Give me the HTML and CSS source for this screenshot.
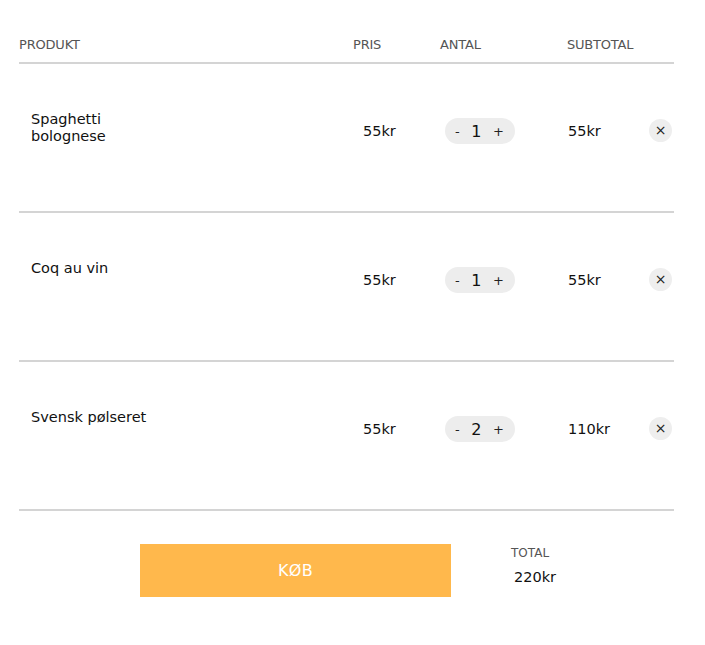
FILE: index.html
```html
<!DOCTYPE html>
<html lang="da">
<head>
<meta charset="utf-8">
<title>Kurv</title>
<link rel="stylesheet" href="styles.css">
</head>
<body>
<div class="cart">
  <div class="cart-head">
    <div class="h-prod">PRODUKT</div>
    <div class="h-price">PRIS</div>
    <div class="h-qty">ANTAL</div>
    <div class="h-sub">SUBTOTAL</div>
  </div>

  <div class="cart-row">
    <div class="c-name">Spaghetti<br>bolognese</div>
    <div class="c-price"><span>55kr</span></div>
    <div class="c-qty"><div class="qty"><span class="q-btn">-</span><span class="q-num">1</span><span class="q-btn">+</span></div></div>
    <div class="c-sub"><span>55kr</span><span class="remove">×</span></div>
  </div>

  <div class="cart-row">
    <div class="c-name">Coq au vin</div>
    <div class="c-price"><span>55kr</span></div>
    <div class="c-qty"><div class="qty"><span class="q-btn">-</span><span class="q-num">1</span><span class="q-btn">+</span></div></div>
    <div class="c-sub"><span>55kr</span><span class="remove">×</span></div>
  </div>

  <div class="cart-row">
    <div class="c-name">Svensk pølseret</div>
    <div class="c-price"><span>55kr</span></div>
    <div class="c-qty"><div class="qty"><span class="q-btn">-</span><span class="q-num">2</span><span class="q-btn">+</span></div></div>
    <div class="c-sub"><span>110kr</span><span class="remove">×</span></div>
  </div>

  <div class="cart-foot">
    <button class="buy">KØB</button>
    <div class="total">
      <div class="total-label">TOTAL</div>
      <div class="total-value">220kr</div>
    </div>
  </div>
</div>
</body>
</html>
```

FILE: styles.css
```css
* { box-sizing: border-box; }

body {
  margin: 0;
  background: #ffffff;
  font-family: "DejaVu Sans", "Noto Sans", sans-serif;
  color: #111111;
}

.cart {
  margin-left: 19px;
  width: 655px;
}

.cart-head {
  display: grid;
  grid-template-columns: 334px 87px 127px 1fr;
  padding-top: 37px;
  height: 64px;
  border-bottom: 2px solid #d4d4d4;
  font-size: 13px;
  line-height: 16px;
  color: #555555;
  letter-spacing: -0.2px;
}

.cart-row {
  display: grid;
  grid-template-columns: 334px 87px 127px 1fr;
  align-items: start;
  height: 149px;
  border-bottom: 2px solid #d4d4d4;
  font-size: 14.5px;
  line-height: 17px;
}

.c-name {
  padding-top: 47px;
  padding-left: 12px;
}

.c-price,
.c-qty,
.c-sub {
  margin-top: 54px;
  height: 26px;
  display: flex;
  align-items: center;
}

.c-price { padding-left: 10px; }

.c-qty { padding-left: 5px; }

.c-sub {
  padding-left: 1px;
  position: relative;
}

.remove {
  position: absolute;
  left: 82px;
  top: 1px;
  width: 23px;
  height: 23px;
  border-radius: 50%;
  background: #eeeeee;
  display: flex;
  align-items: center;
  justify-content: center;
  font-size: 14px;
  color: #222222;
}

.qty {
  width: 70px;
  height: 26px;
  border-radius: 13px;
  background: #ededed;
  display: flex;
  align-items: center;
  justify-content: space-between;
  padding: 0 11px 0 10px;
}

.q-btn {
  font-size: 13px;
  color: #222222;
}

.q-num {
  font-size: 16px;
  color: #111111;
}

.cart-foot {
  display: flex;
  align-items: flex-start;
  padding-top: 33px;
}

.buy {
  margin-left: 121px;
  width: 311px;
  height: 53px;
  border: none;
  background: #ffb84c;
  color: #ffffff;
  font-family: inherit;
  font-size: 16px;
  letter-spacing: 0.3px;
  padding: 0;
}

.total {
  margin-left: 60px;
  padding-top: 1px;
}

.total-label {
  font-size: 12px;
  line-height: 16px;
  color: #555555;
}

.total-value {
  margin-top: 8px;
  padding-left: 3px;
  font-size: 14.5px;
  line-height: 17px;
}
```
